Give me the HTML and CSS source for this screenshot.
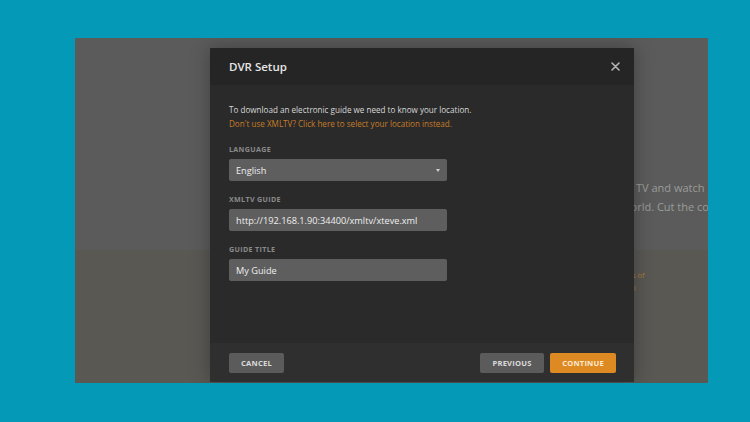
FILE: index.html
```html
<!DOCTYPE html>
<html>
<head>
<meta charset="utf-8">
<link rel="stylesheet" href="styles.css">
</head>
<body>
<div class="screen">
  <div class="hero">
    <p class="hero-line">TV and watch</p>
    <p class="hero-line hero-line2">world. Cut the co</p>
  </div>
  <div class="promo">
    <p class="promo-line">s of</p>
    <p class="promo-line">ll</p>
  </div>

  <div class="modal">
    <div class="modal-header">
      <h1 class="modal-title">DVR Setup</h1>
      <span class="close">
        <svg width="9" height="9" viewBox="0 0 9 9"><path d="M1 1L8 8M8 1L1 8" stroke="#b4b4b4" stroke-width="1.6" stroke-linecap="round"/></svg>
      </span>
    </div>
    <div class="modal-body">
      <p class="intro">To download an electronic guide we need to know your location.</p>
      <p class="intro link">Don't use XMLTV? Click here to select your location instead.</p>

      <div class="field">
        <div class="label">LANGUAGE</div>
        <div class="input select">English<span class="caret"></span></div>
      </div>
      <div class="field">
        <div class="label">XMLTV GUIDE</div>
        <div class="input">http://192.168.1.90:34400/xmltv/xteve.xml</div>
      </div>
      <div class="field">
        <div class="label">GUIDE TITLE</div>
        <div class="input">My Guide</div>
      </div>
    </div>
    <div class="modal-footer">
      <button class="btn">CANCEL</button>
      <div class="right">
        <button class="btn">PREVIOUS</button>
        <button class="btn primary">CONTINUE</button>
      </div>
    </div>
  </div>
</div>
</body>
</html>
```

FILE: styles.css
```css
* { box-sizing: border-box; }
html, body { margin: 0; padding: 0; }
body {
  background: #0399b7;
  width: 750px;
  height: 422px;
  overflow: hidden;
  font-family: "Open Sans", "Liberation Sans", sans-serif;
  padding: 38px 0 0 75px;
}
.screen {
  position: relative;
  width: 633px;
  height: 345px;
  background: #5a5b5a;
  overflow: hidden;
  display: flex;
  flex-direction: column;
}
.hero {
  padding: 140px 0 0 561px;
  height: 212px;
}
.hero-line {
  margin: 0;
  white-space: nowrap;
  font-size: 11px;
  line-height: 19px;
  color: #9b9b9b;
}
.hero-line2 { text-indent: -14px; }
.promo {
  flex: 1;
  background: #5a5853;
  padding: 19px 0 0 557px;
}
.promo-line {
  margin: 0;
  font-size: 7.5px;
  line-height: 13px;
  color: #a77a3e;
  white-space: nowrap;
}
.modal {
  position: absolute;
  left: 135px;
  top: 10px;
  width: 424px;
  height: 334px;
  background: #2a2a2a;
  display: flex;
  flex-direction: column;
  box-shadow: 0 0 18px rgba(0,0,0,0.3);
}
.modal-header {
  height: 37px;
  background: #252525;
  display: flex;
  align-items: center;
  justify-content: space-between;
  padding: 0 14px 0 19px;
}
.modal-title {
  margin: 0;
  font-size: 11.5px;
  font-weight: 600;
  color: #e6e6e6;
}
.close { display: flex; width: 9px; height: 9px; }
.modal-body {
  flex: 1;
  padding: 18px 19px 0 19px;
}
.intro {
  margin: 0;
  font-size: 8.1px;
  line-height: 14px;
  color: #d8d8d8;
  white-space: nowrap;
}
.intro.link { color: #c67d28; }
.field { width: 218px; margin-top: 12px; }
.label {
  font-size: 7.1px;
  font-weight: 700;
  color: #8a8a8a;
  letter-spacing: 0.35px;
  line-height: 12px;
  margin-bottom: 4px;
}
.input {
  height: 22px;
  background: #5e5e5e;
  border-radius: 2px;
  padding: 0 7px;
  display: flex;
  align-items: center;
  justify-content: space-between;
  font-size: 9.2px;
  color: #efefef;
}
.caret {
  width: 0; height: 0;
  border-left: 2.5px solid transparent;
  border-right: 2.5px solid transparent;
  border-top: 3px solid #d0d0d0;
}
.modal-footer {
  height: 39px;
  background: #2f2f2f;
  display: flex;
  align-items: center;
  justify-content: space-between;
  padding: 0 18px 0 19px;
}
.right { display: flex; gap: 6px; }
.btn {
  height: 20px;
  border: none;
  border-radius: 2px;
  background: #5b5b5b;
  color: #dcdcdc;
  font-family: "Open Sans", "Liberation Sans", sans-serif;
  font-size: 7.6px;
  font-weight: 700;
  padding: 0;
  letter-spacing: 0.2px;
}
.btn:first-child { width: 55px; }
.right .btn { width: 64px; }
.btn.primary { width: 66px; background: #de8a22; color: #fbe9d0; }
```
